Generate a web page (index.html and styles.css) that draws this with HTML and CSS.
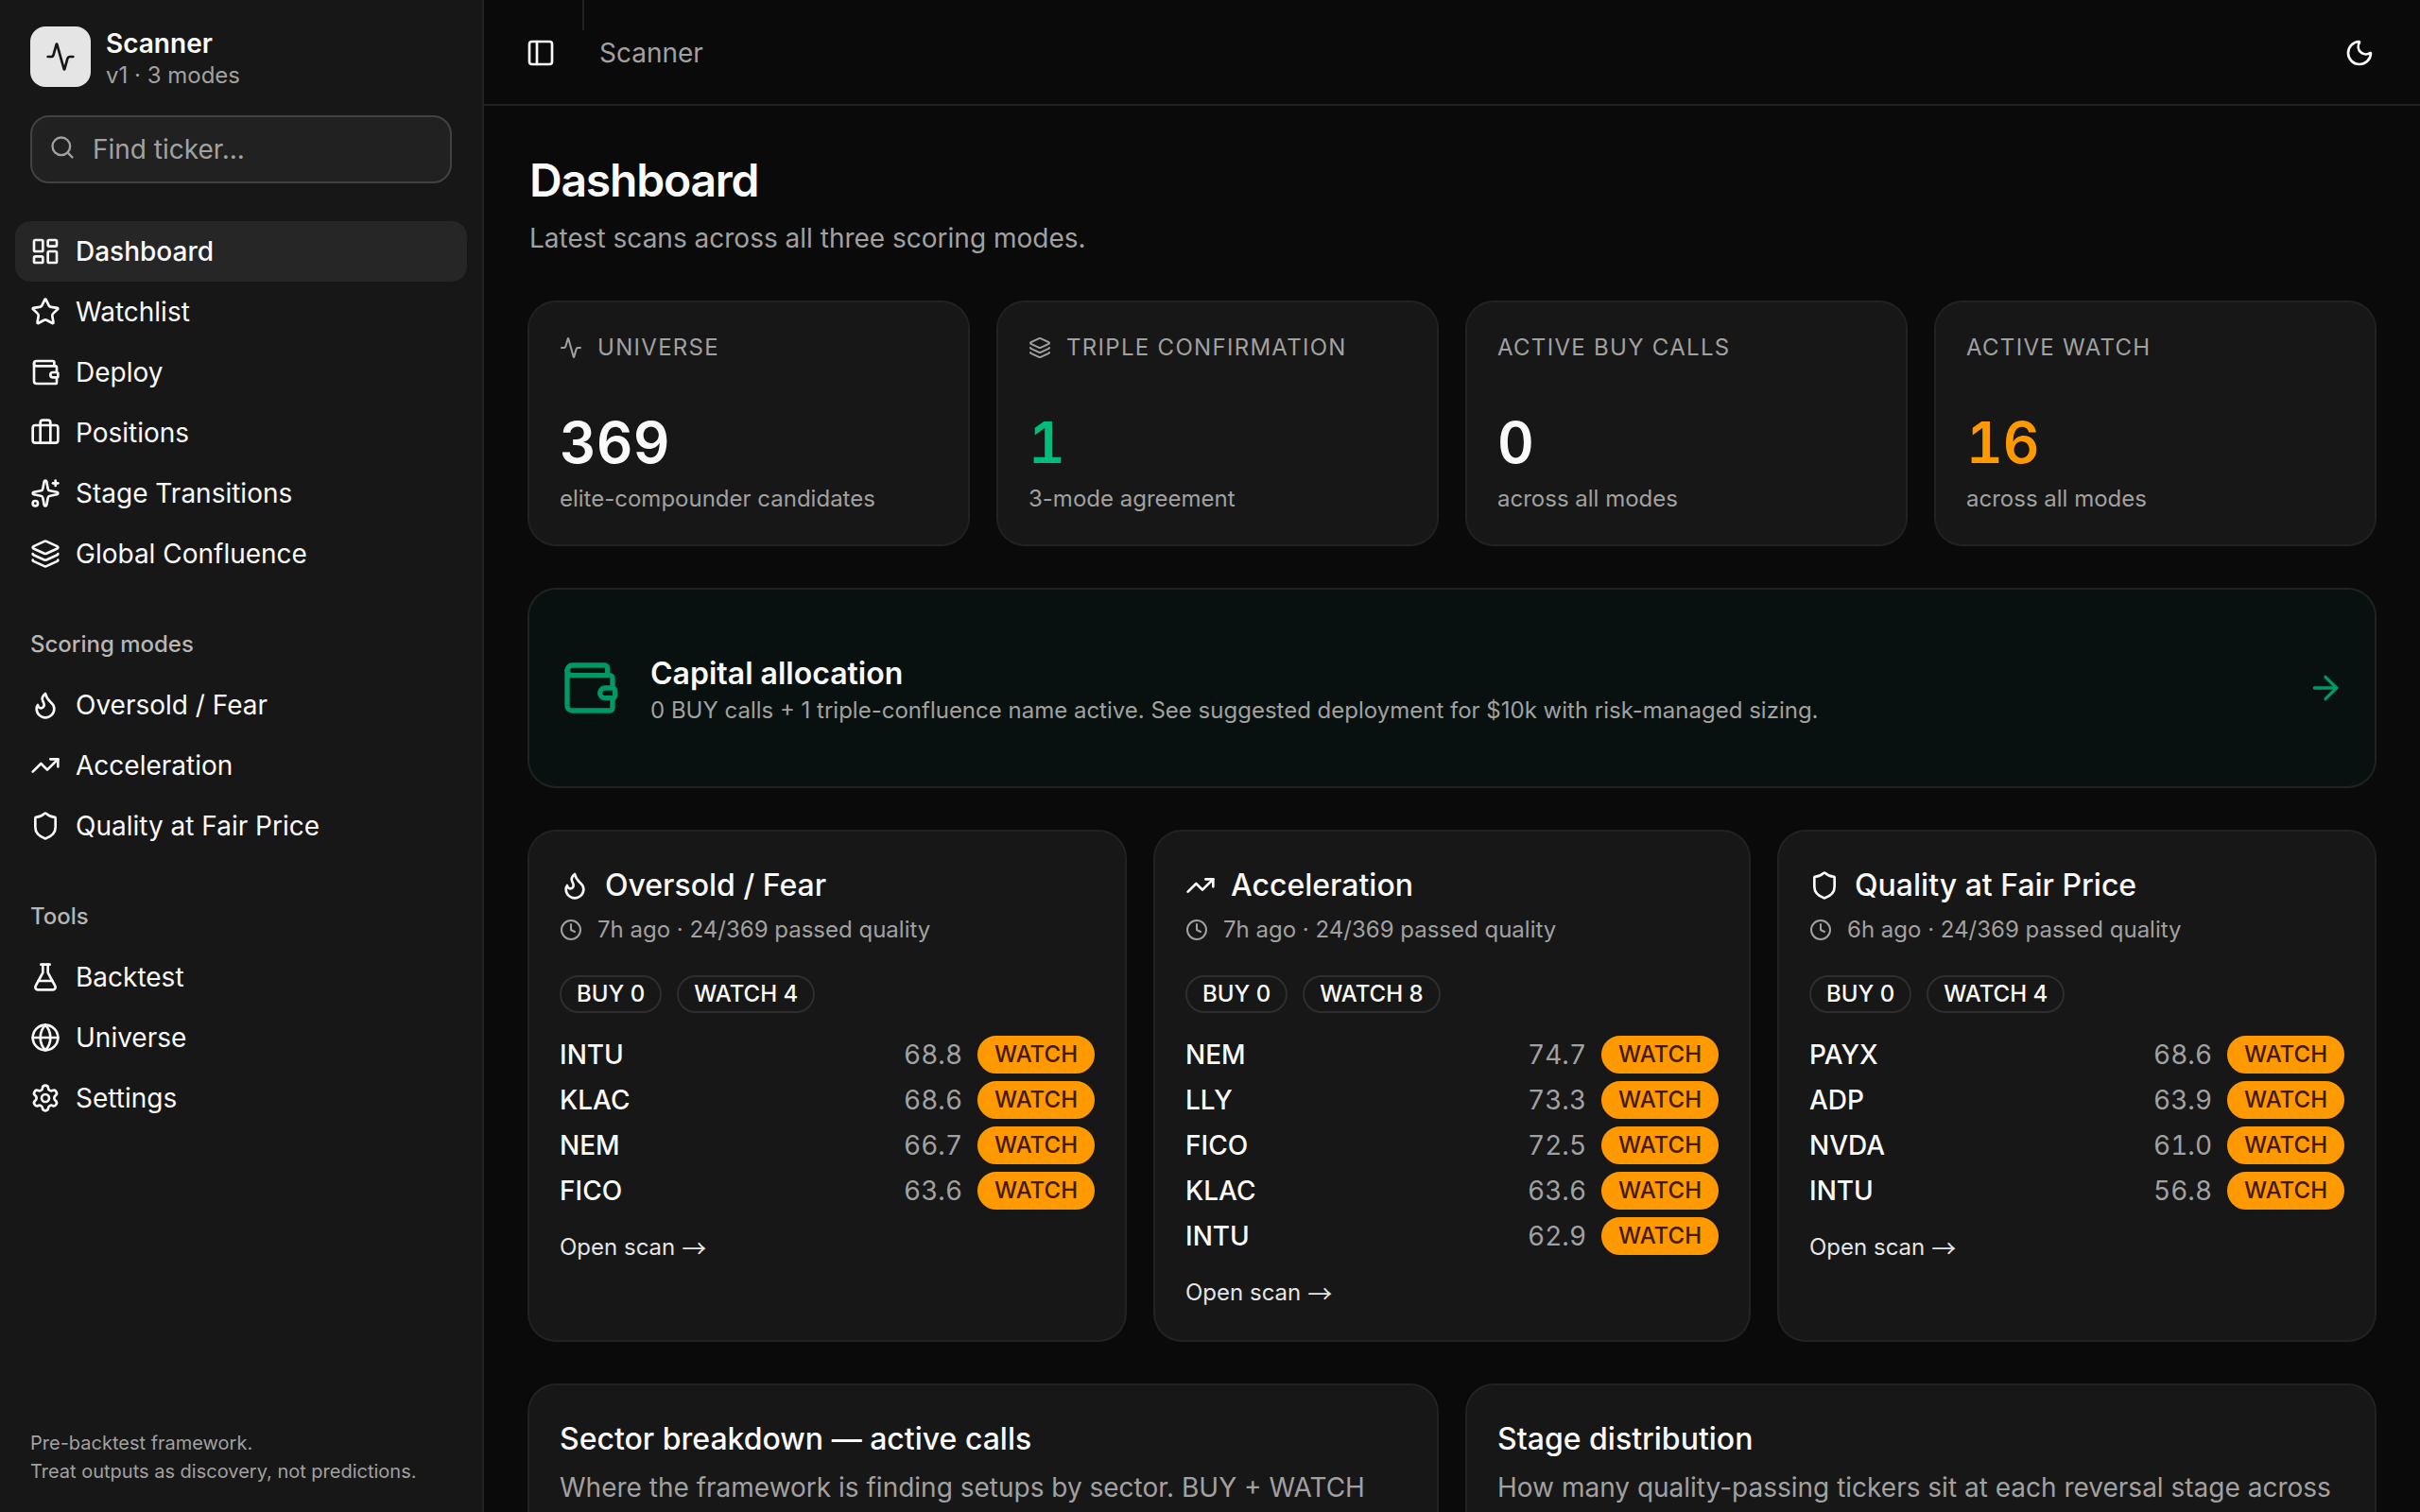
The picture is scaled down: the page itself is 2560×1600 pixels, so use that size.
FILE: index.html
```html
<!DOCTYPE html>
<html lang="en">
<head>
    <meta charset="UTF-8">
    <meta name="viewport" content="width=device-width, initial-scale=1.0">
    <title>Scanner</title>
    <link rel="stylesheet" href="styles.css">
</head>
<body>

<!-- Icon set -->
<svg class="icon-defs" xmlns="http://www.w3.org/2000/svg">
    <symbol id="i-activity" viewBox="0 0 24 24"><path d="M22 12h-2.48a2 2 0 0 0-1.93 1.46l-2.35 8.36a.25.25 0 0 1-.48 0L9.24 2.18a.25.25 0 0 0-.48 0l-2.35 8.36A2 2 0 0 1 4.49 12H2"/></symbol>
    <symbol id="i-search" viewBox="0 0 24 24"><circle cx="11" cy="11" r="8"/><path d="m21 21-4.34-4.34"/></symbol>
    <symbol id="i-dashboard" viewBox="0 0 24 24"><rect width="7" height="9" x="3" y="3" rx="1"/><rect width="7" height="5" x="14" y="3" rx="1"/><rect width="7" height="9" x="14" y="12" rx="1"/><rect width="7" height="5" x="3" y="16" rx="1"/></symbol>
    <symbol id="i-star" viewBox="0 0 24 24"><path d="M11.525 2.295a.53.53 0 0 1 .95 0l2.31 4.679a2.123 2.123 0 0 0 1.595 1.16l5.166.756a.53.53 0 0 1 .294.904l-3.736 3.638a2.123 2.123 0 0 0-.611 1.878l.882 5.14a.53.53 0 0 1-.771.56l-4.618-2.428a2.122 2.122 0 0 0-1.973 0L6.396 21.01a.53.53 0 0 1-.77-.56l.881-5.139a2.122 2.122 0 0 0-.611-1.879L2.16 9.795a.53.53 0 0 1 .294-.906l5.165-.755a2.122 2.122 0 0 0 1.597-1.16z"/></symbol>
    <symbol id="i-wallet" viewBox="0 0 24 24"><path d="M19 7V4a1 1 0 0 0-1-1H5a2 2 0 0 0 0 4h15a1 1 0 0 1 1 1v4h-3a2 2 0 0 0 0 4h3a1 1 0 0 0 1-1v-2a1 1 0 0 0-1-1"/><path d="M3 5v14a2 2 0 0 0 2 2h15a1 1 0 0 0 1-1v-4"/></symbol>
    <symbol id="i-luggage" viewBox="0 0 24 24"><path d="M16 20V4a2 2 0 0 0-2-2h-4a2 2 0 0 0-2 2v16"/><rect width="20" height="14" x="2" y="6" rx="2"/></symbol>
    <symbol id="i-sparkles" viewBox="0 0 24 24"><path d="M11.017 2.814a1 1 0 0 1 1.966 0l1.051 5.558a2 2 0 0 0 1.594 1.594l5.558 1.051a1 1 0 0 1 0 1.966l-5.558 1.051a2 2 0 0 0-1.594 1.594l-1.051 5.558a1 1 0 0 1-1.966 0l-1.051-5.558a2 2 0 0 0-1.594-1.594l-5.558-1.051a1 1 0 0 1 0-1.966l5.558-1.051a2 2 0 0 0 1.594-1.594z"/><path d="M20 2v4"/><path d="M22 4h-4"/><circle cx="4" cy="20" r="2"/></symbol>
    <symbol id="i-layers" viewBox="0 0 24 24"><path d="M12.83 2.18a2 2 0 0 0-1.66 0L2.6 6.08a1 1 0 0 0 0 1.83l8.58 3.91a2 2 0 0 0 1.66 0l8.58-3.9a1 1 0 0 0 0-1.83z"/><path d="M2 12a1 1 0 0 0 .58.91l8.6 3.91a2 2 0 0 0 1.65 0l8.58-3.9A1 1 0 0 0 22 12"/><path d="M2 17a1 1 0 0 0 .58.91l8.6 3.91a2 2 0 0 0 1.65 0l8.58-3.9A1 1 0 0 0 22 17"/></symbol>
    <symbol id="i-flame" viewBox="0 0 24 24"><path d="M12 3q1 4 4 6.5t3 5.5a1 1 0 0 1-14 0 5 5 0 0 1 1-3 1 1 0 0 0 5 0c0-2-1.5-3-1.5-5q0-2 2.5-4"/></symbol>
    <symbol id="i-trending" viewBox="0 0 24 24"><path d="M16 7h6v6"/><path d="m22 7-8.5 8.5-5-5L2 17"/></symbol>
    <symbol id="i-shield" viewBox="0 0 24 24"><path d="M20 13c0 5-3.5 7.5-7.66 8.95a1 1 0 0 1-.67-.01C7.5 20.5 4 18 4 13V6a1 1 0 0 1 1-1c2 0 4.5-1.2 6.24-2.72a1.17 1.17 0 0 1 1.52 0C14.51 3.81 17 5 19 5a1 1 0 0 1 1 1z"/></symbol>
    <symbol id="i-flask" viewBox="0 0 24 24"><path d="M14 2v6a2 2 0 0 0 .245.96l5.51 10.08A2 2 0 0 1 18 22H6a2 2 0 0 1-1.755-2.96l5.51-10.08A2 2 0 0 0 10 8V2"/><path d="M6.453 15h11.094"/><path d="M8.5 2h7"/></symbol>
    <symbol id="i-globe" viewBox="0 0 24 24"><circle cx="12" cy="12" r="10"/><path d="M12 2a14.5 14.5 0 0 0 0 20 14.5 14.5 0 0 0 0-20"/><path d="M2 12h20"/></symbol>
    <symbol id="i-settings" viewBox="0 0 24 24"><path d="M9.671 4.136a2.34 2.34 0 0 1 4.659 0 2.34 2.34 0 0 0 3.319 1.915 2.34 2.34 0 0 1 2.33 4.033 2.34 2.34 0 0 0 0 3.831 2.34 2.34 0 0 1-2.33 4.033 2.34 2.34 0 0 0-3.319 1.915 2.34 2.34 0 0 1-4.659 0 2.34 2.34 0 0 0-3.32-1.915 2.34 2.34 0 0 1-2.33-4.033 2.34 2.34 0 0 0 0-3.831A2.34 2.34 0 0 1 6.35 6.051a2.34 2.34 0 0 0 3.319-1.915"/><circle cx="12" cy="12" r="3"/></symbol>
    <symbol id="i-panel" viewBox="0 0 24 24"><rect width="18" height="18" x="3" y="3" rx="2"/><path d="M9 3v18"/></symbol>
    <symbol id="i-moon" viewBox="0 0 24 24"><path d="M20.985 12.486a9 9 0 1 1-9.473-9.472c.405-.022.617.46.402.803a6 6 0 0 0 8.268 8.268c.344-.215.825-.004.803.401"/></symbol>
    <symbol id="i-clock" viewBox="0 0 24 24"><circle cx="12" cy="12" r="10"/><path d="M12 6v6l4 2"/></symbol>
    <symbol id="i-arrow" viewBox="0 0 24 24"><path d="M5 12h14"/><path d="m12 5 7 7-7 7"/></symbol>
</svg>

<div class="app">

    <!-- Sidebar -->
    <aside class="sidebar">
        <div class="brand">
            <div class="logo"><svg class="icon"><use href="#i-activity"/></svg></div>
            <div>
                <div class="brand-name">Scanner</div>
                <div class="brand-sub">v1 · 3 modes</div>
            </div>
        </div>
        <div class="search">
            <svg class="icon"><use href="#i-search"/></svg>
            <input type="text" placeholder="Find ticker...">
        </div>

        <nav class="nav">
            <a class="nav-item active"><svg class="icon"><use href="#i-dashboard"/></svg>Dashboard</a>
            <a class="nav-item"><svg class="icon"><use href="#i-star"/></svg>Watchlist</a>
            <a class="nav-item"><svg class="icon"><use href="#i-wallet"/></svg>Deploy</a>
            <a class="nav-item"><svg class="icon"><use href="#i-luggage"/></svg>Positions</a>
            <a class="nav-item"><svg class="icon"><use href="#i-sparkles"/></svg>Stage Transitions</a>
            <a class="nav-item"><svg class="icon"><use href="#i-layers"/></svg>Global Confluence</a>
        </nav>
        <nav class="nav">
            <div class="nav-label">Scoring modes</div>
            <a class="nav-item"><svg class="icon"><use href="#i-flame"/></svg>Oversold / Fear</a>
            <a class="nav-item"><svg class="icon"><use href="#i-trending"/></svg>Acceleration</a>
            <a class="nav-item"><svg class="icon"><use href="#i-shield"/></svg>Quality at Fair Price</a>
        </nav>
        <nav class="nav">
            <div class="nav-label">Tools</div>
            <a class="nav-item"><svg class="icon"><use href="#i-flask"/></svg>Backtest</a>
            <a class="nav-item"><svg class="icon"><use href="#i-globe"/></svg>Universe</a>
            <a class="nav-item"><svg class="icon"><use href="#i-settings"/></svg>Settings</a>
        </nav>

        <div class="sidebar-footer">Pre-backtest framework.<br>Treat outputs as discovery, not predictions.</div>
    </aside>

    <div class="main">
        <header class="topbar">
            <div class="topbar-btn"><svg class="icon"><use href="#i-panel"/></svg></div>
            <div class="topbar-sep"></div>
            <span class="crumb">Scanner</span>
            <svg class="icon moon"><use href="#i-moon"/></svg>
        </header>

        <main class="content">
            <div class="page-head">
                <h1>Dashboard</h1>
                <p>Latest scans across all three scoring modes.</p>
            </div>

            <!-- Summary tiles -->
            <section class="grid stats">
                <div class="card">
                    <div class="stat-label"><svg class="icon"><use href="#i-activity"/></svg>Universe</div>
                    <div class="stat-value">369</div>
                    <div class="stat-note">elite-compounder candidates</div>
                </div>
                <div class="card">
                    <div class="stat-label"><svg class="icon"><use href="#i-layers"/></svg>Triple confirmation</div>
                    <div class="stat-value green">1</div>
                    <div class="stat-note">3-mode agreement</div>
                </div>
                <div class="card">
                    <div class="stat-label">Active buy calls</div>
                    <div class="stat-value">0</div>
                    <div class="stat-note">across all modes</div>
                </div>
                <div class="card">
                    <div class="stat-label">Active watch</div>
                    <div class="stat-value amber">16</div>
                    <div class="stat-note">across all modes</div>
                </div>
            </section>

            <!-- Capital allocation banner -->
            <a class="card banner">
                <svg class="icon banner-icon"><use href="#i-wallet"/></svg>
                <div class="banner-text">
                    <div class="banner-title">Capital allocation</div>
                    <div class="banner-note">0 BUY calls + 1 triple-confluence name active. See suggested deployment for $10k with risk-managed sizing.</div>
                </div>
                <svg class="icon banner-arrow"><use href="#i-arrow"/></svg>
            </a>

            <!-- Scoring modes -->
            <section class="grid modes">
                <div class="card">
                    <div class="mode-title"><svg class="icon"><use href="#i-flame"/></svg>Oversold / Fear</div>
                    <div class="mode-meta"><svg class="icon"><use href="#i-clock"/></svg>7h ago · 24/369 passed quality</div>
                    <div class="badges"><span class="badge">BUY 0</span><span class="badge">WATCH 4</span></div>
                    <ul class="tickers">
                        <li><b>INTU</b><span class="score">68.8</span><span class="badge watch">WATCH</span></li>
                        <li><b>KLAC</b><span class="score">68.6</span><span class="badge watch">WATCH</span></li>
                        <li><b>NEM</b><span class="score">66.7</span><span class="badge watch">WATCH</span></li>
                        <li><b>FICO</b><span class="score">63.6</span><span class="badge watch">WATCH</span></li>
                    </ul>
                    <a class="open-scan">Open scan <span class="arrow">→</span></a>
                </div>
                <div class="card">
                    <div class="mode-title"><svg class="icon"><use href="#i-trending"/></svg>Acceleration</div>
                    <div class="mode-meta"><svg class="icon"><use href="#i-clock"/></svg>7h ago · 24/369 passed quality</div>
                    <div class="badges"><span class="badge">BUY 0</span><span class="badge">WATCH 8</span></div>
                    <ul class="tickers">
                        <li><b>NEM</b><span class="score">74.7</span><span class="badge watch">WATCH</span></li>
                        <li><b>LLY</b><span class="score">73.3</span><span class="badge watch">WATCH</span></li>
                        <li><b>FICO</b><span class="score">72.5</span><span class="badge watch">WATCH</span></li>
                        <li><b>KLAC</b><span class="score">63.6</span><span class="badge watch">WATCH</span></li>
                        <li><b>INTU</b><span class="score">62.9</span><span class="badge watch">WATCH</span></li>
                    </ul>
                    <a class="open-scan">Open scan <span class="arrow">→</span></a>
                </div>
                <div class="card">
                    <div class="mode-title"><svg class="icon"><use href="#i-shield"/></svg>Quality at Fair Price</div>
                    <div class="mode-meta"><svg class="icon"><use href="#i-clock"/></svg>6h ago · 24/369 passed quality</div>
                    <div class="badges"><span class="badge">BUY 0</span><span class="badge">WATCH 4</span></div>
                    <ul class="tickers">
                        <li><b>PAYX</b><span class="score">68.6</span><span class="badge watch">WATCH</span></li>
                        <li><b>ADP</b><span class="score">63.9</span><span class="badge watch">WATCH</span></li>
                        <li><b>NVDA</b><span class="score">61.0</span><span class="badge watch">WATCH</span></li>
                        <li><b>INTU</b><span class="score">56.8</span><span class="badge watch">WATCH</span></li>
                    </ul>
                    <a class="open-scan">Open scan <span class="arrow">→</span></a>
                </div>
            </section>

            <section class="grid breakdown">
                <div class="card">
                    <div class="card-title">Sector breakdown — active calls</div>
                    <p class="card-note">Where the framework is finding setups by sector. BUY + WATCH</p>
                </div>
                <div class="card">
                    <div class="card-title">Stage distribution</div>
                    <p class="card-note">How many quality-passing tickers sit at each reversal stage across</p>
                </div>
            </section>
        </main>
    </div>
</div>

</body>
</html>
```

FILE: styles.css
```css
* { box-sizing: border-box; margin: 0; padding: 0; }
body { font-family: Inter, sans-serif; font-size: 28px; line-height: 40px; background: #0a0a0a; color: #fafafa; overflow: hidden; }

.icon-defs { display: none; }
.icon { width: 32px; height: 32px; flex-shrink: 0; fill: none; stroke: currentColor; stroke-width: 2; stroke-linecap: round; stroke-linejoin: round; }

.app { display: flex; height: 100vh; }

/* Sidebar */
.sidebar { width: 512px; flex-shrink: 0; display: flex; flex-direction: column; background: #171717; border-right: 2px solid #222222; }
.brand { display: flex; align-items: center; gap: 16px; padding: 24px 32px 0; }
.logo { width: 64px; height: 64px; border-radius: 16px; background: #e5e5e5; color: #171717; display: flex; align-items: center; justify-content: center; }
.brand-name { font-weight: 600; line-height: 40px; padding-top: 2px; margin-bottom: -2px; }
.brand-sub { font-size: 24px; line-height: 32px; color: #a1a1a1; }
.search { display: flex; align-items: center; gap: 18px; height: 72px; margin: 26px 32px 24px; padding: 0 18px; border: 2px solid #424242; border-radius: 20px; background: #212121; color: #a1a1a1; }
.search .icon { width: 28px; height: 28px; margin-bottom: 4px; }
.search input { flex: 1; min-width: 0; background: none; border: 0; outline: 0; font: inherit; color: #fafafa; }
.search input::placeholder { color: #a1a1a1; opacity: 1; }
.nav { padding: 16px; }
.nav-item { display: flex; align-items: center; gap: 16px; height: 64px; padding: 0 16px; border-radius: 16px; }
.nav-item.active { background: #262626; font-weight: 500; }
.nav-label { height: 64px; padding: 0 16px; font-size: 24px; font-weight: 500; line-height: 64px; color: #b6b6b6; }
.sidebar-footer { margin-top: auto; padding: 0 32px 28px; font-size: 20px; line-height: 30px; color: #a1a1a1; }

/* Top bar */
.main { flex: 1; min-width: 0; }
.topbar { display: flex; align-items: center; gap: 16px; height: 112px; padding: 2px 48px 0 32px; border-bottom: 2px solid #222222; }
.topbar-btn { width: 56px; height: 56px; display: flex; align-items: center; justify-content: center; }
.topbar-sep { align-self: flex-start; width: 2px; height: 32px; margin-top: -2px; background: #222222; }
.crumb { flex: 1; color: #a1a1a1; }

.content { display: flex; flex-direction: column; gap: 48px; padding: 48px; }
.page-head h1 { font-size: 48px; font-weight: 600; line-height: 62px; letter-spacing: -0.025em; }
.page-head p { margin-top: 10px; color: #a1a1a1; }

/* Cards */
.grid { display: grid; gap: 32px; }
.stats { grid-template-columns: repeat(4, 1fr); }
.modes { grid-template-columns: 630px 1fr 630px; }
.breakdown { grid-template-columns: repeat(2, 1fr); }
.card { padding: 32px; border-radius: 28px; background: #171717; box-shadow: 0 0 0 2px #222222; }

.stat-label { display: flex; align-items: center; gap: 16px; font-size: 24px; line-height: 32px; letter-spacing: 1.3px; text-transform: uppercase; color: #a1a1a1; }
.stat-label .icon { width: 24px; height: 24px; }
.stat-value { margin: 48px 0 8px; font-size: 60px; font-weight: 600; line-height: 72px; font-variant-numeric: tabular-nums; }
.stat-note { font-size: 24px; line-height: 32px; color: #a1a1a1; }
.green { color: #00bc7d; }
.amber { color: #fe9a00; }

.banner { display: flex; align-items: center; gap: 32px; height: 208px; background: #08110f; }
.banner-icon { width: 64px; height: 64px; color: #009966; }
.banner-text { flex: 1; }
.banner-title { font-size: 32px; font-weight: 600; line-height: 46px; padding-top: 2px; }
.banner-note { font-size: 24px; line-height: 32px; color: #a1a1a1; }
.banner-arrow { width: 40px; height: 40px; color: #009966; }

.modes .card { min-height: 538px; }
.mode-title { display: flex; align-items: center; gap: 16px; font-size: 32px; font-weight: 500; line-height: 46px; padding-top: 2px; }
.mode-meta { display: flex; align-items: center; gap: 16px; margin-top: 8px; font-size: 24px; line-height: 32px; color: #a1a1a1; }
.mode-meta .icon { width: 24px; height: 24px; }
.badges { display: flex; gap: 16px; margin: 32px 0 24px; }
.badge { display: flex; align-items: center; height: 40px; padding: 0 16px; border: 2px solid #2e2e2e; border-radius: 20px; font-size: 24px; font-weight: 500; line-height: 32px; }
.badge.watch { border-color: #fe9a00; background: #fe9a00; color: #461901; }
.tickers { list-style: none; display: flex; flex-direction: column; gap: 8px; }
.tickers li { display: flex; align-items: center; gap: 16px; height: 40px; }
.tickers b { flex: 1; font-weight: 500; }
.score { color: #a1a1a1; font-variant-numeric: tabular-nums; }
.open-scan { display: flex; align-items: center; gap: 7px; height: 32px; margin-top: 24px; font-size: 24px; line-height: 32px; color: #e5e5e5; }
.arrow { font-family: "Noto Sans CJK JP", sans-serif; font-size: 26px; }

.card-title { font-size: 32px; font-weight: 500; line-height: 46px; padding-top: 2px; }
.card-note { margin-top: 8px; color: #a1a1a1; }
```
